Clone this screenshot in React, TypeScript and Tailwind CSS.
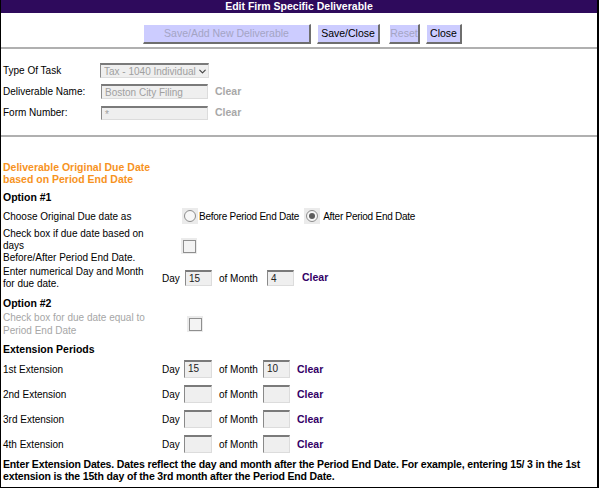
import { ChevronDown } from "lucide-react";

const sans = "font-['Liberation_Sans',Arial,sans-serif]";

function Box({ value = "", className = "" }: { value?: string; className?: string }) {
    return (
        <div
            className={`bg-[#efefef] border-t-2 border-l border-t-[#7a7a7a] border-l-[#8a8a8a] border-r border-b border-r-[#dcdcdc] border-b-[#dcdcdc] pl-[3px] text-[#222] leading-[13px] whitespace-nowrap overflow-hidden ${className}`}
        >
            {value}
        </div>
    );
}

function Radio({ checked = false }: { checked?: boolean }) {
    return (
        <div className="w-[16px] h-[16px] bg-[#ebebeb] flex items-center justify-center shrink-0">
            <div className="w-[12px] h-[12px] rounded-full border border-[#8c8c8c] bg-[#f7f7f7] flex items-center justify-center">
                {checked && <div className="w-[6px] h-[6px] rounded-full bg-[#5c5c5c]" />}
            </div>
        </div>
    );
}

function Check() {
    return (
        <div className="w-[16px] h-[16px] bg-[#ebebeb] flex items-center justify-center">
            <div className="w-[13px] h-[13px] border border-[#8f8f8f] bg-[#f3f3f3]" />
        </div>
    );
}

function ExtRow({ label, day = "", month = "" }: { label: string; day?: string; month?: string }) {
    return (
        <div className="flex items-center h-[25px]">
            <div className="w-[161px] shrink-0 pl-[2px]">{label}</div>
            <span className="w-[22px]">Day</span>
            <Box value={day} className="w-[28px] h-[18px] mt-[-1px]" />
            <span className="ml-[7px] w-[44px]">of Month</span>
            <Box value={month} className="w-[27px] h-[18px] mt-[-1px]" />
            <span className="ml-[7px] font-bold text-[10.5px] text-[#330066]">Clear</span>
        </div>
    );
}

export default function App() {
    return (
        <div className={`${sans} w-[599px] h-[488px] bg-white border-l border-r-2 border-b border-black text-[10px] text-black flex flex-col overflow-hidden`}>
            {/* Title bar */}
            <div className="h-[13px] bg-[#2e0a5c] text-white font-bold text-[10.5px] leading-[13px] text-center">
                Edit Firm Specific Deliverable
            </div>

            {/* Buttons */}
            <div className="flex items-center pl-[142px] pt-[11px] text-[10.5px]">
                <button className="w-[168px] h-[20px] bg-[#ccccff] border-t border-l border-white border-r-2 border-b-2 border-r-[#6e6e6e] border-b-[#6e6e6e] text-[#a4a4c4]">
                    Save/Add New Deliverable
                </button>
                <button className="ml-[6px] w-[63px] h-[20px] bg-[#ccccff] border-t border-l border-white border-r-2 border-b-2 border-r-[#6e6e6e] border-b-[#6e6e6e] text-black">
                    Save/Close
                </button>
                <button className="ml-[9px] w-[31px] h-[20px] bg-[#ccccff] border-t border-l border-white border-r-2 border-b-2 border-r-[#6e6e6e] border-b-[#6e6e6e] text-[#a4a4c4]">
                    Reset
                </button>
                <button className="ml-[6px] w-[36px] h-[20px] bg-[#ccccff] border-t border-l border-white border-r-2 border-b-2 border-r-[#6e6e6e] border-b-[#6e6e6e] text-black">
                    Close
                </button>
            </div>
            <div className="mt-[3px] h-[2px] bg-[#b0b0b0]" />

            {/* Task fields */}
            <div className="pt-[10px] pb-[13px]">
                <div className="flex items-center h-[21px] mt-[1px]">
                    <div className="w-[99px] pl-[2px]">Type Of Task</div>
                    <div className="w-[109px] h-[15px] bg-[#efefef] border-t-2 border-l border-t-[#7a7a7a] border-l-[#8a8a8a] border-r border-b border-r-[#dcdcdc] border-b-[#dcdcdc] flex items-center pl-[3px] text-[#a0a0a0]">
                        <span className="w-[92px] overflow-hidden whitespace-nowrap">Tax - 1040 Individual</span>
                        <ChevronDown size={11} strokeWidth={2.5} className="text-[#444] ml-[1px]" />
                    </div>
                </div>
                <div className="flex items-center h-[21px]">
                    <div className="w-[99px] pl-[2px]">Deliverable Name:</div>
                    <Box value="Boston City Filing" className="ml-[1px] w-[107px] h-[15px] !text-[#a0a0a0]" />
                    <span className="ml-[7px] font-bold text-[10.5px] text-[#a8a8a8]">Clear</span>
                </div>
                <div className="flex items-center h-[21px] mb-[-1px]">
                    <div className="w-[99px] pl-[2px]">Form Number:</div>
                    <Box value="*" className="ml-[1px] w-[107px] h-[14px] !text-[#a0a0a0]" />
                    <span className="ml-[7px] font-bold text-[10.5px] text-[#a8a8a8]">Clear</span>
                </div>
            </div>
            <div className="h-[2px] bg-[#b0b0b0]" />

            {/* Due date section */}
            <div className="mt-[24px] pl-[2px] font-bold text-[10.5px] leading-[12px] text-[#f7931e]">
                Deliverable Original Due Date
                <br />
                based on Period End Date
            </div>
            <div className="mt-[6px] pl-[2px] font-bold text-[10.5px] leading-[12px]">Option #1</div>

            <div className="mt-[3px] flex items-center h-[20px]">
                <div className="w-[161px] shrink-0 pl-[2px]">Choose Original Due date as</div>
                <div className="ml-[20px] flex items-center">
                    <Radio />
                    <span className="ml-[1px] tracking-[-0.25px]">Before Period End Date</span>
                    <div className="ml-[5px]">
                        <Radio checked />
                    </div>
                    <span className="ml-[3px] tracking-[-0.25px]">After Period End Date</span>
                </div>
            </div>

            <div className="mt-[2px] flex items-center">
                <div className="w-[161px] shrink-0 pl-[2px] leading-[12px]">
                    Check box if due date based on
                    <br />
                    days
                    <br />
                    Before/After Period End Date.
                </div>
                <div className="ml-[19px]">
                    <Check />
                </div>
            </div>

            <div className="mt-[2px] flex items-center">
                <div className="w-[161px] shrink-0 pl-[2px] leading-[12px]">
                    Enter numerical Day and Month
                    <br />
                    for due date.
                </div>
                <span className="w-[23px]">Day</span>
                <Box value="15" className="w-[27px] h-[16px]" />
                <span className="ml-[7px] w-[48px]">of Month</span>
                <Box value="4" className="w-[27px] h-[16px]" />
                <span className="ml-[8px] font-bold text-[10.5px] text-[#330066]">Clear</span>
            </div>

            <div className="mt-[7px] pl-[2px] font-bold text-[10.5px] leading-[12px]">Option #2</div>
            <div className="mt-[2px] flex items-center">
                <div className="w-[161px] shrink-0 pl-[2px] leading-[13px] text-[#a6a6a6]">
                    Check box for due date equal to
                    <br />
                    Period End Date
                </div>
                <div className="ml-[25px]">
                    <Check />
                </div>
            </div>

            <div className="mt-[6px] pl-[2px] font-bold text-[10.5px] leading-[12px]">Extension Periods</div>
            <div className="mt-[2px]">
                <ExtRow label="1st Extension" day="15" month="10" />
                <ExtRow label="2nd Extension" />
                <ExtRow label="3rd Extension" />
                <ExtRow label="4th Extension" />
            </div>

            <div className="mt-[1px] pl-[2px] font-bold text-[10.5px] leading-[12px] tracking-[-0.15px] whitespace-nowrap">
                Enter Extension Dates. Dates reflect the day and month after the Period End Date. For example, entering 15/ 3 in the 1st
                <br />
                extension is the 15th day of the 3rd month after the Period End Date.
            </div>
        </div>
    );
}
